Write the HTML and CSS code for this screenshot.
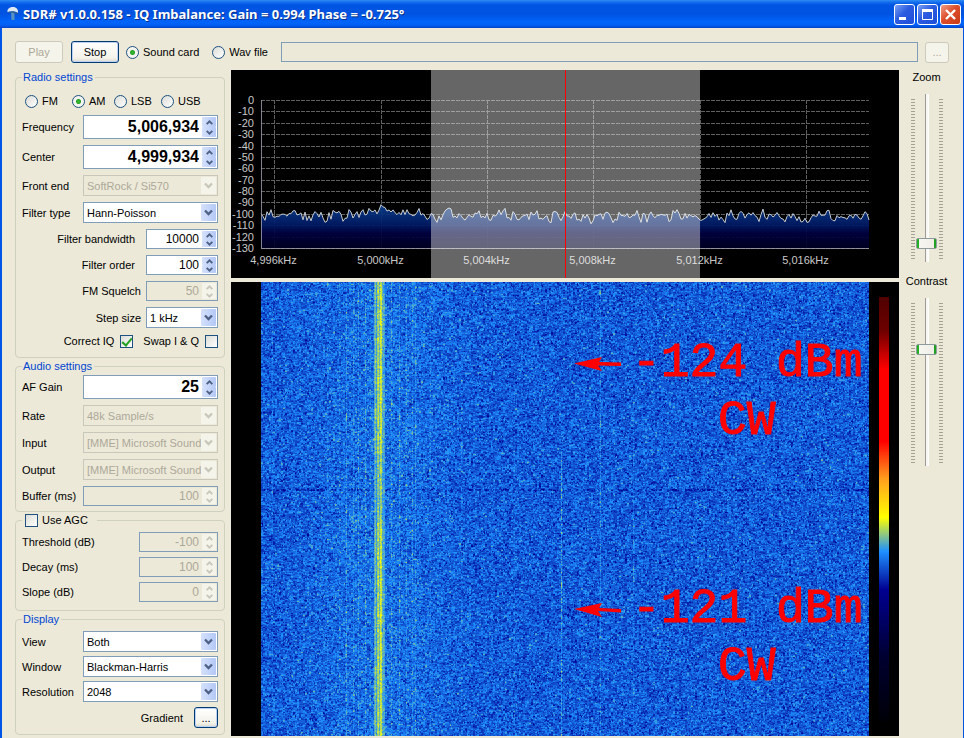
FILE: index.html
```
<!DOCTYPE html>
<html lang="en">
<head>
    <meta charset="utf-8">
    <title>SDR#</title>
    <meta name="viewport" content="width=device-width, initial-scale=1">
    <link rel="stylesheet" href="styles.css">
</head>
<body>
    <svg class="symbols" aria-hidden="true">
        <symbol id="down" viewBox="0 0 9 7"><path d="M1 1.5 L4.500 5 L8 1.500" fill="none" stroke="currentColor" stroke-width="2.300"/></symbol>
        <symbol id="spin-up" viewBox="0 0 7 5"><path d="M.7 4.200 L3.500 1.400 L6.300 4.200" fill="none" stroke="currentColor" stroke-width="1.900"/></symbol>
        <symbol id="spin-down" viewBox="0 0 7 5"><path d="M.7 .8 L3.500 3.600 L6.300 .8" fill="none" stroke="currentColor" stroke-width="1.900"/></symbol>
    </svg>

    <header class="title-bar">
        <svg class="app-icon" width="14" height="17" viewBox="0 0 14 17">
            <path d="M1.500 6 C1 2.500 4 1 7 1 C10.500 1 12.500 3.500 12 7 C10 5.300 5.500 4.800 1.500 6 Z" fill="#dfe9f3"/>
            <path d="M5 5 L8.500 5.500 L8.500 14 L5.500 14 Z" fill="#5b93bd"/>
            <path d="M2 6 C5 5 9 5.200 12 7 L11 8.500 C8 6.500 5 6.500 2.500 7 Z" fill="#2c5f93"/>
        </svg>
        <h1>SDR# v1.0.0.158 - IQ Imbalance: Gain = 0.994 Phase = -0.725°</h1>
        <button class="win-button" aria-label="Minimize"><svg width="19" height="19" viewBox="0 0 19 19"><rect x="4" y="12" width="7" height="3" fill="#fff"/></svg></button>
        <button class="win-button" aria-label="Maximize"><svg width="19" height="19" viewBox="0 0 19 19"><path d="M4.500 5.500 H14.500 V14.500 H4.500 Z" fill="none" stroke="#fff"/><rect x="4" y="4" width="11" height="3" fill="#fff"/></svg></button>
        <button class="win-button close" aria-label="Close"><svg width="19" height="19" viewBox="0 0 19 19"><path d="M5 5 L14 14 M14 5 L5 14" stroke="#fff" stroke-width="2.400"/></svg></button>
    </header>

    <div class="client">
        <div class="toolbar">
            <button class="xp-button" disabled>Play</button>
            <button class="xp-button focused">Stop</button>
            <label class="option"><input type="radio" name="source" checked>Sound card</label>
            <label class="option"><input type="radio" name="source">Wav file</label>
            <input type="text" class="file-name" aria-label="Wav file name" readonly>
            <button class="xp-button browse" disabled>...</button>
        </div>

        <div class="content">
            <form class="sidebar">
                <fieldset class="radio-settings">
                    <legend>Radio settings</legend>
                    <div class="row modes">
                        <label class="option"><input type="radio" name="mode">FM</label>
                        <label class="option"><input type="radio" name="mode" checked>AM</label>
                        <label class="option"><input type="radio" name="mode">LSB</label>
                        <label class="option"><input type="radio" name="mode">USB</label>
                    </div>
                    <div class="row">
                        <label for="frequency">Frequency</label>
                        <span class="spin big"><input type="text" id="frequency" value="5,006,934"></span>
                    </div>
                    <div class="row">
                        <label for="center">Center</label>
                        <span class="spin big"><input type="text" id="center" value="4,999,934"></span>
                    </div>
                    <div class="row">
                        <label for="frontend">Front end</label>
                        <span class="combo"><select id="frontend" disabled><option>SoftRock / Si570</option></select></span>
                    </div>
                    <div class="row">
                        <label for="filter-type">Filter type</label>
                        <span class="combo"><select id="filter-type"><option>Hann-Poisson</option></select></span>
                    </div>
                    <div class="row right">
                        <label for="bandwidth">Filter bandwidth</label>
                        <span class="spin small"><input type="text" id="bandwidth" value="10000"></span>
                    </div>
                    <div class="row right">
                        <label for="order">Filter order</label>
                        <span class="spin small"><input type="text" id="order" value="100"></span>
                    </div>
                    <div class="row right close-label">
                        <label for="squelch">FM Squelch</label>
                        <span class="spin small"><input type="text" id="squelch" value="50" disabled></span>
                    </div>
                    <div class="row right close-label">
                        <label for="step">Step size</label>
                        <span class="combo small"><select id="step"><option>1 kHz</option></select></span>
                    </div>
                    <div class="row right checks">
                        <label for="correct-iq">Correct IQ</label>
                        <input type="checkbox" id="correct-iq" checked>
                        <label for="swap-iq">Swap I &amp; Q</label>
                        <input type="checkbox" id="swap-iq">
                    </div>
                </fieldset>

                <fieldset class="audio-settings">
                    <legend>Audio settings</legend>
                    <div class="row">
                        <label for="af-gain">AF Gain</label>
                        <span class="spin big"><input type="text" id="af-gain" value="25"></span>
                    </div>
                    <div class="row">
                        <label for="rate">Rate</label>
                        <span class="combo"><select id="rate" disabled><option>48k Sample/s</option></select></span>
                    </div>
                    <div class="row">
                        <label for="input">Input</label>
                        <span class="combo"><select id="input" disabled><option>[MME] Microsoft Sound</option></select></span>
                    </div>
                    <div class="row">
                        <label for="output">Output</label>
                        <span class="combo"><select id="output" disabled><option>[MME] Microsoft Sound</option></select></span>
                    </div>
                    <div class="row">
                        <label for="buffer">Buffer (ms)</label>
                        <span class="spin"><input type="text" id="buffer" value="100" disabled></span>
                    </div>
                </fieldset>

                <fieldset class="agc">
                    <legend><label class="option"><input type="checkbox">Use AGC</label></legend>
                    <div class="row">
                        <label for="threshold">Threshold (dB)</label>
                        <span class="spin medium"><input type="text" id="threshold" value="-100" disabled></span>
                    </div>
                    <div class="row">
                        <label for="decay">Decay (ms)</label>
                        <span class="spin medium"><input type="text" id="decay" value="100" disabled></span>
                    </div>
                    <div class="row">
                        <label for="slope">Slope (dB)</label>
                        <span class="spin medium"><input type="text" id="slope" value="0" disabled></span>
                    </div>
                </fieldset>

                <fieldset class="display">
                    <legend>Display</legend>
                    <div class="row">
                        <label for="view">View</label>
                        <span class="combo"><select id="view"><option>Both</option></select></span>
                    </div>
                    <div class="row">
                        <label for="window">Window</label>
                        <span class="combo"><select id="window"><option>Blackman-Harris</option></select></span>
                    </div>
                    <div class="row">
                        <label for="resolution">Resolution</label>
                        <span class="combo"><select id="resolution"><option>2048</option></select></span>
                    </div>
                    <div class="row right">
                        <label for="gradient">Gradient</label>
                        <button type="button" id="gradient" class="xp-button focused browse">...</button>
                    </div>
                </fieldset>
            </form>

            <main class="charts">
                <svg id="spectrum" class="spectrum"></svg>
                <div class="waterfall">
                    <canvas id="waterfall"></canvas>
                    <div class="color-bar"></div>
                    <div class="note note-top">
                        <svg class="arrow" width="50" height="16" viewBox="0 0 50 16"><path d="M0 7.500 L28 1 L25 6 L47 6.500 V10 L24 9.500 L28 15 Z" fill="#f00"/></svg>
                        <p>-124 dBm</p>
                        <p class="mode">CW</p>
                    </div>
                    <div class="note note-bottom">
                        <svg class="arrow" width="50" height="16" viewBox="0 0 50 16"><path d="M0 7 L28 1 L25 6 L47 7 V10.500 L24 9 L28 15 Z" fill="#f00"/></svg>
                        <p>-121 dBm</p>
                        <p class="mode">CW</p>
                    </div>
                </div>
            </main>

            <aside class="sliders">
                <label for="zoom">Zoom</label>
                <div class="slider"><input type="range" id="zoom" min="0" max="100" value="8"></div>
                <label for="contrast">Contrast</label>
                <div class="slider"><input type="range" id="contrast" min="0" max="100" value="71"></div>
            </aside>
        </div>
    </div>

    <script src="script.js"></script>
</body>
</html>
```

FILE: styles.css
```
* {
    box-sizing: border-box;
}
body {
    margin: 0;
    min-height: 100vh;
    display: flex;
    flex-direction: column;
    font-family: "Liberation Sans", Arial, sans-serif;
    font-size: 11px;
    line-height: 14px;
    color: #000;
    background-color: #ece9d8;
}
.symbols {
    display: none;
}

/* title bar */
.title-bar {
    display: flex;
    align-items: center;
    gap: 2px;
    height: 28px;
    padding: 0 3px 0 6px;
    background: linear-gradient(#2f8ef5 0, #1670f0 2px, #0055e3 5px, #0053e1 14px, #0064fb 22px, #0060f5 25px, #0044c8 28px);
}
.app-icon {
    margin-right: 1px;
}
h1 {
    flex: 1;
    margin: 0;
    font-family: "Noto Sans", Tahoma, sans-serif;
    font-size: 13px;
    font-weight: bold;
    line-height: 20px;
    color: #fff;
    text-shadow: 1px 1px #0a2f88;
    white-space: nowrap;
    overflow: hidden;
}
.win-button {
    width: 21px;
    height: 21px;
    padding: 0;
    border: 1px solid #fff;
    border-radius: 3px;
    background: linear-gradient(135deg, #7ba0f5, #2a5be0 45%, #1e4ed8);
}
.win-button svg {
    display: block;
}
.win-button.close {
    background: linear-gradient(135deg, #f0a088, #dd4f2c 45%, #c83a16);
}

/* window body */
.client {
    flex: 1;
    display: flex;
    flex-direction: column;
    padding: 13px 0 2px 13px;
    border-left: 2px solid #0054e6;
    border-right: 1px solid #0054e6;
}
.toolbar {
    display: flex;
    align-items: center;
    margin: 0 14px 7px 0;
}
.xp-button {
    width: 48px;
    height: 22px;
    padding: 0;
    font: inherit;
    color: #000;
    border: 1px solid #003c74;
    border-radius: 3px;
    background: linear-gradient(#fff, #f3f2ea 80%, #dcd7cb);
}
.xp-button.focused {
    box-shadow: inset 0 0 0 1px #bcd0f3;
}
.xp-button:disabled {
    color: #aca899;
    border-color: #cdcabb;
    background: #f5f4ea;
}
.xp-button.browse {
    width: 24px;
    height: 21px;
}
.toolbar .focused {
    margin: 0 7px 0 8px;
}
.toolbar .option {
    margin-right: 13px;
}
.option {
    display: inline-flex;
    align-items: center;
    gap: 4px;
    white-space: nowrap;
}
.file-name {
    flex: 1;
    min-width: 0;
    height: 20px;
    margin-right: 7px;
    border: 1px solid #7f9db9;
    background-color: #ece9d8;
}
.content {
    flex: 1;
    display: flex;
}

/* radios and check boxes */
input[type="radio"],
input[type="checkbox"] {
    appearance: none;
    flex: none;
    width: 13px;
    height: 13px;
    margin: 0;
    border: 1px solid #1c5180;
    background: linear-gradient(135deg, #dcdcd7, #fff);
}
input[type="radio"] {
    border-radius: 50%;
}
input[type="radio"]:checked {
    background: radial-gradient(circle, #3fc13c 0, #22a121 2px, #f4f4f0 3px);
}
input[type="checkbox"]:checked::after {
    content: "";
    display: block;
    width: 4px;
    height: 8px;
    margin: 0 0 0 3px;
    border: solid #21a121;
    border-width: 0 2px 2px 0;
    transform: rotate(40deg);
}

/* group boxes */
.sidebar {
    flex: none;
    width: 210px;
    margin-right: 6px;
}
fieldset {
    display: flex;
    flex-direction: column;
    gap: 6px;
    min-width: 0;
    margin: 0 0 1px;
    padding: 2px 6px 5px;
    border: 1px solid #d0d0bf;
    border-radius: 4px;
}
legend {
    height: 14px;
    padding: 0 2px 0 1px;
    color: #0046d5;
}
.radio-settings {
    padding-top: 9px;
    padding-bottom: 9px;
}
.agc {
    gap: 5px;
    padding-top: 5px;
    padding-bottom: 8px;
}
.agc legend {
    padding: 0 9px 0 3px;
    color: #000;
}
.display {
    gap: 4px;
    padding-top: 5px;
    padding-bottom: 6px;
    margin-bottom: 0;
}
.row {
    display: flex;
    align-items: center;
    justify-content: space-between;
    white-space: nowrap;
}
.row.right {
    justify-content: flex-end;
    gap: 11px;
}
.row.close-label {
    gap: 5px;
}
.row.modes {
    display: grid;
    grid-template-columns: 47px 42px 47px 1fr;
    height: 16px;
    padding-left: 3px;
}
.row.checks {
    gap: 6px;
    height: 14px;
}
.checks input:first-of-type {
    margin-right: 4px;
}
.display .right {
    padding-top: 1px;
}

/* numeric boxes */
.spin {
    display: flex;
    width: 135px;
    height: 20px;
    padding: 1px;
    border: 1px solid #7f9db9;
    background-color: #fff;
}
.spin.big {
    height: 24px;
}
.spin.small,
.combo.small {
    width: 72px;
}
.spin.medium {
    width: 79px;
}
.spin input {
    flex: 1;
    min-width: 0;
    padding: 0 3px 0 0;
    border: 0;
    font: inherit;
    font-size: 12px;
    text-align: right;
    color: #000;
    background: none;
}
.spin.big input {
    font-size: 16px;
    font-weight: bold;
}
.spin input:disabled {
    color: #aca899;
}
.spin:has(input:disabled) {
    background-color: #ece9d8;
}
.spin-buttons {
    display: flex;
    flex-direction: column;
    width: 14px;
}
.spin-buttons button {
    flex: 1;
    display: flex;
    align-items: center;
    justify-content: center;
    min-height: 0;
    padding: 0;
    border: 0;
    border-radius: 1px;
    color: #4d6185;
    background: linear-gradient(90deg, #d5e1fc, #b4c8f6);
}
.spin-buttons button:disabled {
    color: #c9c7ba;
    background: #f5f4ea;
}

/* drop-downs */
.combo {
    display: flex;
    position: relative;
    width: 135px;
    height: 21px;
    color: #4d6185;
}
.combo select {
    appearance: none;
    width: 100%;
    padding: 0 15px 0 3px;
    border: 1px solid #7f9db9;
    border-radius: 0;
    font: inherit;
    color: #000;
    background-color: #fff;
    overflow: hidden;
}
.combo select:disabled {
    color: #aca899;
    border-color: #c9c7ba;
    background-color: #ece9d8;
    opacity: 1;
}
.combo svg {
    position: absolute;
    top: 2px;
    right: 2px;
    width: 15px;
    height: 17px;
    padding: 5px 3px;
    border-radius: 1px;
    background: linear-gradient(90deg, #d5e1fc, #b4c8f6);
    pointer-events: none;
}
.combo select:disabled + svg {
    color: #c9c7ba;
    background: #f5f4ea;
}

/* charts */
.charts {
    flex: 1;
    min-width: 0;
    display: flex;
    flex-direction: column;
    gap: 4px;
}
.spectrum {
    display: block;
    width: 100%;
    height: 208px;
    background-color: #000;
}
.spectrum text {
    font-size: 11px;
    fill: #c8c8c8;
}
.waterfall {
    flex: 1;
    position: relative;
    display: flex;
    padding-left: 30px;
    background-color: #000;
    overflow: hidden;
}
.waterfall canvas {
    flex: 1;
    min-width: 0;
    height: 100%;
}
.color-bar {
    width: 10px;
    margin: 15px 10px;
    background: linear-gradient(#500000, #6e0000 8%, #f00 17%, #f00 34%, #ffa01e 43%, #ff0 52%, #1e90ff 60%, #000091 69%, #000030 85%, #000008);
}
.note {
    position: absolute;
    left: 401px;
    font-family: "Liberation Mono", "Courier New", monospace;
    font-size: 48px;
    line-height: 58px;
    color: #f00;
    -webkit-text-stroke: 1px #f00;
    white-space: nowrap;
}
.note p {
    margin: 0;
}
.note .mode {
    padding-left: 86px;
}
.note-top {
    top: 52px;
}
.note-bottom {
    top: 298px;
}
.arrow {
    position: absolute;
    top: 22px;
    left: -58px;
}

/* sliders */
.sliders {
    flex: none;
    display: flex;
    flex-direction: column;
    align-items: center;
    gap: 10px;
    width: 64px;
    padding-right: 9px;
}
.slider {
    display: flex;
    justify-content: center;
    width: 32px;
    height: 168px;
    margin-bottom: 2px;
    background:
        repeating-linear-gradient(#a5a293 0, #a5a293 1px, transparent 1px, transparent 3px) 0 5px / 4px 160px no-repeat,
        repeating-linear-gradient(#a5a293 0, #a5a293 1px, transparent 1px, transparent 3px) 28px 5px / 4px 160px no-repeat;
}
.slider input {
    appearance: none;
    writing-mode: vertical-lr;
    direction: rtl;
    width: 21px;
    height: 168px;
    margin: 0;
    background: linear-gradient(90deg, #9d9c99 1px, #f4f3ee 1px, #fff) center / 4px 100% no-repeat;
}
.slider input::-webkit-slider-thumb {
    appearance: none;
    width: 21px;
    height: 11px;
    border: 1px solid #8f9a9c;
    border-radius: 2px;
    background: linear-gradient(90deg, #21b121 2px, #f7f7f2 2px, #eeede6 17px, #21a121 17px);
}
```

FILE: script.js
```
const SVG = 'http://www.w3.org/2000/svg';
const MARGIN = 30;

// Repeatable random numbers so the noise looks the same on each load
let seed = 5006934;
function random() {
    seed = (seed * 1664525 + 1013904223) % 4294967296;
    return seed / 4294967296;
}

function useIcon(name, width, height) {
    return '<svg width="' + width + '" height="' + height + '" aria-hidden="true"><use href="#' + name + '"/></svg>';
}

document.querySelectorAll('.spin').forEach(spin => {
    const state = spin.querySelector('input').disabled ? ' disabled' : '';
    spin.insertAdjacentHTML('beforeend',
        '<span class="spin-buttons">' +
        '<button type="button" aria-label="Up"' + state + '>' + useIcon('spin-up', 7, 5) + '</button>' +
        '<button type="button" aria-label="Down"' + state + '>' + useIcon('spin-down', 7, 5) + '</button></span>');
});
document.querySelectorAll('.combo').forEach(combo => {
    combo.insertAdjacentHTML('beforeend', useIcon('down', 15, 17));
});

function add(parent, tag, attrs, text) {
    const el = document.createElementNS(SVG, tag);
    for (const key in attrs) el.setAttribute(key, attrs[key]);
    if (text) el.textContent = text;
    parent.appendChild(el);
    return el;
}

function drawSpectrum() {
    const svg = document.getElementById('spectrum');
    const width = svg.clientWidth;
    const height = svg.clientHeight;
    const plot = width - 2 * MARGIN;
    const bottom = height - MARGIN;
    const perDb = (bottom - MARGIN) / 130;
    const freqX = khz => Math.round(MARGIN + (khz - 4995.5) * plot / 22.86);
    svg.innerHTML = '<defs><linearGradient id="fill" gradientUnits="userSpaceOnUse" x1="0" y1="130" x2="0" y2="' + bottom + '">' +
        '<stop offset="0" stop-color="#104a98"/><stop offset=".5" stop-color="#001c68"/>' +
        '<stop offset=".7" stop-color="#000040"/><stop offset="1" stop-color="#000024"/></linearGradient></defs>';

    for (let db = 0; db <= 130; db += 10) {
        const y = Math.round(MARGIN + db * perDb) + .5;
        add(svg, 'line', {x1: MARGIN, x2: MARGIN + plot, y1: y, y2: y, stroke: '#606060', 'stroke-dasharray': '4 1'});
        add(svg, 'text', {x: 23, y: y + 3.5, 'text-anchor': 'end'}, db ? '-' + db : '0');
    }
    for (let khz = 4996; khz <= 5016; khz += 4) {
        const x = freqX(khz) + .5;
        add(svg, 'line', {x1: x, x2: x, y1: MARGIN, y2: bottom, stroke: '#606060', 'stroke-dasharray': '4 1'});
        add(svg, 'text', {x: x - 1, y: bottom + 16, 'text-anchor': 'middle'}, khz.toLocaleString('en-US') + 'kHz');
    }

    const carrier = freqX(5000);
    let points = '';
    let level = 102;
    for (let x = MARGIN; x <= MARGIN + plot; x += 2) {
        level = 102 + (level - 102) * .2 + (random() + random() - 1) * 7;
        const distance = Math.abs(x - carrier);
        const bump = 9 * Math.exp(-distance / 7) + 2 * Math.exp(-distance / 50);
        points += ' ' + x + ',' + (MARGIN + (level - bump) * perDb).toFixed(1);
    }
    add(svg, 'polygon', {points: MARGIN + ',' + bottom + points + ' ' + (MARGIN + plot) + ',' + bottom, fill: 'url(#fill)', 'fill-opacity': .93});
    add(svg, 'polyline', {points: points, fill: 'none', stroke: '#c8ccd0'});
    add(svg, 'path', {d: 'M' + (MARGIN + .5) + ' ' + MARGIN + 'V' + (bottom + .5) + 'H' + (MARGIN + plot), fill: 'none', stroke: '#a0a0b0', 'stroke-opacity': .8});

    // Pass band of the AM filter around the tuned frequency
    const left = freqX(5001.88);
    const right = freqX(5012);
    add(svg, 'rect', {x: left, y: 0, width: right - left, height: height, fill: '#fff', 'fill-opacity': .4});
    const tuned = freqX(5006.934) + .5;
    add(svg, 'line', {x1: tuned, x2: tuned, y1: 0, y2: height, stroke: '#f00'});
}

// Blue to yellow part of the gradient
function color(value) {
    const stops = [[0, 0, 145], [30, 144, 255], [255, 255, 0]];
    const v = Math.max(0, Math.min(1.999, value));
    const i = Math.floor(v);
    return stops[i].map((c, k) => c + (stops[i + 1][k] - c) * (v - i));
}

function drawWaterfall() {
    const canvas = document.getElementById('waterfall');
    canvas.width = canvas.clientWidth;
    canvas.height = canvas.clientHeight;
    const width = canvas.width;
    const height = canvas.height;
    const scale = width / 608;
    const ctx = canvas.getContext('2d');
    const image = ctx.createImageData(width, height);

    // Extra level in each column: [x, gain, first row]
    const lines = [[11, .15, 0], [66, .15, 0], [78, .15, 0], [85, .3, 0], [92, .2, 0], [97, .3, 0], [104, .3, 0], [109, .15, 0],
        [130, .25, 0], [138, .3, 0], [145, .25, 0], [151, .25, 0], [154, .25, 0], [169, .12, 0], [200, .12, 0], [253, .12, 0],
        [300, .5, 170], [339, .3, 0], [372, .2, 120]];
    const extra = new Float32Array(width);
    for (let x = 0; x < width; x++) {
        const d = Math.abs(x / scale - 118);
        extra[x] = .14 * Math.exp(-d * d / 5000);
    }
    const band = [.5, .65, .35, .8, .9, .6, 1, .95, .5, .5, .4];
    band.forEach((gain, i) => { extra[Math.round(113 * scale) + i] += gain; });

    let above = new Float32Array(width).fill(.63);
    for (let y = 0; y < height; y++) {
        const fade = y > 170 && y < 240 ? .85 : 1;
        let noise = 0;
        for (let x = 0; x < width; x++) {
            // neighbouring bins and rows share part of their level
            if (x % 2 === 0 || random() < .3) {
                noise = .63 + (random() + random() + random() - 1.5) * .56;
            }
            const value = noise * .75 + above[x] * .25;
            above[x] = noise;
            let level = value + extra[x] * fade;
            if (extra[x] > .3) level = .6 + extra[x] * fade + (value - .6) * .6;
            for (const [lx, gain, start] of lines) {
                if (Math.round(lx * scale) === x && y >= start) level += gain * (.3 + random());
            }
            if ((y === 207 || y === 208) && extra[x] < .3 && Math.sin(x * .9) + Math.sin(x * .37) > 0) level -= .35;
            const [r, g, b] = color(level);
            const i = (y * width + x) * 4;
            image.data[i] = r;
            image.data[i + 1] = g;
            image.data[i + 2] = b;
            image.data[i + 3] = 255;
        }
    }
    ctx.putImageData(image, 0, 0);
}

function draw() {
    seed = 5006934;
    drawSpectrum();
    drawWaterfall();
}

draw();
window.addEventListener('resize', draw);
```
